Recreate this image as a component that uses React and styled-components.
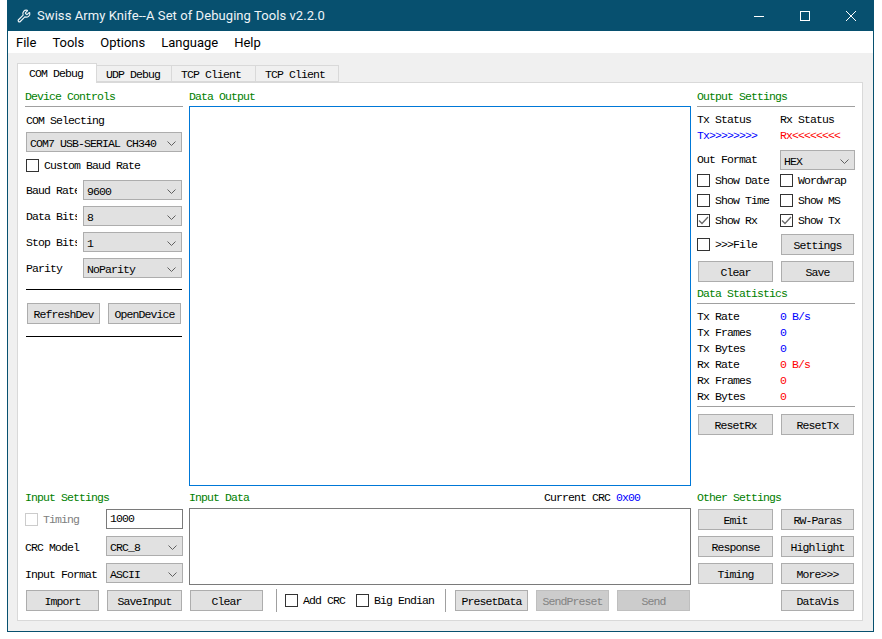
import styled, { createGlobalStyle } from "styled-components"
import { Wrench } from "lucide-react"

const GlobalStyle = createGlobalStyle`
    html, body {
        margin: 0;
        background: #fff;
    }
    * {
        box-sizing: border-box;
    }
`

const Window = styled.div`
    width: 867px;
    height: 632px;
    margin-left: 7px;
    display: flex;
    flex-direction: column;
    background: #f0f0f0;
    border: 1px solid #07506f;
    border-top: 0;
    font-family: "Liberation Mono", monospace;
    font-size: 11.5px;
    letter-spacing: -0.9px;
    color: #000;
`

const TitleBar = styled.div`
    height: 31px;
    flex: none;
    display: flex;
    align-items: center;
    background: #07506f;
    color: #eef4f7;
    padding-left: 10px;
    margin: 0 -1px;
`

const TitleText = styled.span`
    font-family: Roboto, sans-serif;
    font-size: 13px;
    font-variant-ligatures: none;
    letter-spacing: 0.07px;
    margin-left: 6px;
    flex: 1;
`

const WinButton = styled.div`
    width: 46px;
    height: 31px;
    display: flex;
    align-items: center;
    justify-content: center;
`

const MenuBar = styled.div`
    height: 22px;
    flex: none;
    display: flex;
    align-items: center;
    gap: 16px;
    padding-left: 8px;
    background: #fff;
    font-family: Roboto, sans-serif;
    font-size: 13px;
    letter-spacing: 0;
`

const Client = styled.div`
    flex: 1;
    display: flex;
    flex-direction: column;
    padding: 10px 10px 10px 9px;
`

const TabRow = styled.div`
    display: flex;
    align-items: flex-end;
    height: 19px;
    flex: none;
`

const Tab = styled.div`
    width: ${(p) => p.$w}px;
    height: ${(p) => (p.$active ? 20 : 17)}px;
    margin-bottom: ${(p) => (p.$active ? -1 : 0)}px;
    padding-left: ${(p) => (p.$active ? 11 : 9)}px;
    line-height: ${(p) => (p.$active ? 20 : 17)}px;
    background: ${(p) => (p.$active ? "#fff" : "#f0f0f0")};
    border: 1px solid #d9d9d9;
    border-bottom: ${(p) => (p.$active ? 0 : "1px solid #d9d9d9")};
    border-left: ${(p) => (p.$active ? "1px solid #d9d9d9" : 0)};
    position: relative;
    z-index: ${(p) => (p.$active ? 1 : 0)};
`

const Pane = styled.div`
    flex: 1;
    display: grid;
    grid-template-columns: 158px 502px 158px;
    grid-template-rows: 1fr auto;
    column-gap: 6px;
    row-gap: 3px;
    padding: 5px 7px 9px;
    background: #fff;
    border: 1px solid #d9d9d9;
`

const Column = styled.div`
    display: flex;
    flex-direction: column;
    min-height: 0;
`

const Heading = styled.div`
    color: #008000;
    line-height: 18px;
    height: ${(p) => p.$h || 18}px;
    margin-top: ${(p) => p.$mt || 0}px;
    flex: none;
`

const Rule = styled.div`
    height: 1px;
    flex: none;
    background: ${(p) => p.$color || "#a0a0a0"};
    margin: ${(p) => p.$mt || 0}px ${(p) => p.$inset || 0}px 0;
`

const Label = styled.div`
    line-height: 18px;
    height: 16px;
    margin-top: ${(p) => p.$mt || 0}px;
    margin-left: ${(p) => p.$ml || 0}px;
    white-space: nowrap;
`

const SelectBox = styled.div`
    width: ${(p) => p.$w}px;
    height: 20px;
    flex: none;
    display: flex;
    align-items: center;
    justify-content: space-between;
    margin-top: ${(p) => p.$mt || 0}px;
    margin-left: ${(p) => p.$ml || 0}px;
    padding: 2px 5px 0 3px;
    background: #e1e1e1;
    border: 1px solid #adadad;
    white-space: nowrap;
`

const FieldRow = styled.div`
    display: flex;
    align-items: center;
    height: 20px;
    flex: none;
    margin-top: ${(p) => p.$mt || 0}px;
`

const FieldLabel = styled.div`
    width: ${(p) => p.$w}px;
    height: 20px;
    flex: none;
    margin-left: ${(p) => p.$ml || 0}px;
    overflow: hidden;
    white-space: nowrap;
    line-height: ${(p) => p.$lh || 22}px;
`

const CheckRow = styled.div`
    display: flex;
    align-items: center;
    gap: 5px;
    height: ${(p) => p.$h || 19}px;
    flex: none;
    margin-top: ${(p) => p.$mt || 0}px;
    margin-left: ${(p) => p.$ml || 0}px;
    color: ${(p) => (p.$disabled ? "#808080" : "#000")};
    white-space: nowrap;
`

const CheckLabel = styled.span`
    line-height: 13px;
`

const Box = styled.span`
    width: 13px;
    height: 13px;
    flex: none;
    display: flex;
    align-items: center;
    justify-content: center;
    background: #fff;
    border: 1px solid ${(p) => (p.$disabled ? "#cccccc" : "#333333")};
`

const Button = styled.div`
    width: ${(p) => p.$w || 73}px;
    height: 21px;
    flex: none;
    display: flex;
    align-items: center;
    justify-content: center;
    padding-top: 2px;
    margin-left: ${(p) => p.$ml || 0}px;
    background: ${(p) => (p.$disabled ? "#cccccc" : "#e1e1e1")};
    border: 1px solid ${(p) => (p.$disabled ? "#bfbfbf" : "#adadad")};
    color: ${(p) => (p.$disabled ? "#838383" : "#000")};
    white-space: nowrap;
`

const ButtonRow = styled.div`
    display: flex;
    flex: none;
    height: 21px;
    align-items: center;
    margin-top: ${(p) => p.$mt || 0}px;
`

const TwoCol = styled.div`
    display: grid;
    grid-template-columns: 83px 75px;
    flex: none;
    row-gap: ${(p) => p.$gap || 0}px;
    margin-top: ${(p) => p.$mt || 0}px;
`

const StatList = styled.div`
    display: flex;
    flex-direction: column;
    flex: none;
    margin-top: 4px;
`

const StatRow = styled.div`
    display: flex;
    height: 16px;
    line-height: 18px;
    flex: none;
`

const StatKey = styled.span`
    width: 83px;
    flex: none;
`

const Colored = styled.span`
    color: ${(p) => p.$color};
`

const OutputBox = styled.div`
    flex: 1;
    background: #fff;
    border: 1px solid #0078d7;
`

const InputHead = styled.div`
    display: flex;
    justify-content: space-between;
    height: 19px;
    flex: none;
    padding-right: 51px;
    line-height: 18px;
`

const InputBox = styled.div`
    height: 77px;
    flex: none;
    background: #fff;
    border: 1px solid #7a7a7a;
`

const TextField = styled.div`
    width: 77px;
    height: 20px;
    flex: none;
    margin-left: auto;
    padding-left: 3px;
    line-height: 18px;
    background: #fff;
    border: 1px solid #7a7a7a;
`

const Separator = styled.div`
    width: 1px;
    height: 23px;
    flex: none;
    background: #a0a0a0;
    margin-left: ${(p) => p.$ml}px;
`

const Chevron = () => (
    <svg width="9" height="5" viewBox="0 0 9 5" fill="none" stroke="#606060">
        <path d="M0.5 0.5 L4.5 4.5 L8.5 0.5" />
    </svg>
)

const Check = () => (
    <svg width="11" height="11" viewBox="0 0 11 11" fill="none" stroke="#6a6a6a" strokeWidth="1.3">
        <path d="M1 5.5 L4 8.5 L10 2" />
    </svg>
)

const Select = ({ children, w, mt, ml }) => (
    <SelectBox $w={w} $mt={mt} $ml={ml}>
        <span>{children}</span>
        <Chevron />
    </SelectBox>
)

const CheckItem = ({ label, checked, disabled, h, mt, ml }) => (
    <CheckRow $h={h} $mt={mt} $ml={ml} $disabled={disabled}>
        <Box $disabled={disabled}>{checked && <Check />}</Box>
        <CheckLabel>{label}</CheckLabel>
    </CheckRow>
)

const Stat = ({ name, value, color }) => (
    <StatRow>
        <StatKey>{name}</StatKey>
        <Colored $color={color}>{value}</Colored>
    </StatRow>
)

const App = () => {
    return (<>
        <GlobalStyle />
        <Window>
            <TitleBar>
                <Wrench size={14} color="#eef4f7" />
                <TitleText>Swiss Army Knife--A Set of Debuging Tools v2.2.0</TitleText>
                <WinButton>
                    <svg width="10" height="10" viewBox="0 0 10 10" stroke="#fff"><path d="M0 5.5 H10" /></svg>
                </WinButton>
                <WinButton>
                    <svg width="10" height="10" viewBox="0 0 10 10" stroke="#fff" fill="none"><rect x="0.5" y="0.5" width="9" height="9" /></svg>
                </WinButton>
                <WinButton>
                    <svg width="10" height="10" viewBox="0 0 10 10" stroke="#fff"><path d="M0 0 L10 10 M10 0 L0 10" /></svg>
                </WinButton>
            </TitleBar>
            <MenuBar>
                <span>File</span>
                <span>Tools</span>
                <span>Options</span>
                <span>Language</span>
                <span>Help</span>
            </MenuBar>
            <Client>
                <TabRow>
                    <Tab $w={80} $active>COM Debug</Tab>
                    <Tab $w={75}>UDP Debug</Tab>
                    <Tab $w={84}>TCP Client</Tab>
                    <Tab $w={83}>TCP Client</Tab>
                </TabRow>
                <Pane>
                    <Column>
                        <Heading>Device Controls</Heading>
                        <Rule />
                        <Label $mt={5} $ml={1}>COM Selecting</Label>
                        <Select w={156} mt={4} ml={1}>COM7 USB-SERIAL CH340</Select>
                        <CheckItem label="Custom Baud Rate" h={13} mt={7} ml={1} />
                        <FieldRow $mt={8}>
                            <FieldLabel $w={51} $ml={1}>Baud Rate</FieldLabel>
                            <Select w={99} ml={6}>9600</Select>
                        </FieldRow>
                        <FieldRow $mt={6}>
                            <FieldLabel $w={51} $ml={1}>Data Bits</FieldLabel>
                            <Select w={99} ml={6}>8</Select>
                        </FieldRow>
                        <FieldRow $mt={6}>
                            <FieldLabel $w={51} $ml={1}>Stop Bits</FieldLabel>
                            <Select w={99} ml={6}>1</Select>
                        </FieldRow>
                        <FieldRow $mt={6}>
                            <FieldLabel $w={51} $ml={1}>Parity</FieldLabel>
                            <Select w={99} ml={6}>NoParity</Select>
                        </FieldRow>
                        <Rule $color="#000" $mt={11} $inset={1} />
                        <ButtonRow $mt={13}>
                            <Button $ml={2}>RefreshDev</Button>
                            <Button $ml={8}>OpenDevice</Button>
                        </ButtonRow>
                        <Rule $color="#000" $mt={12} $inset={1} />
                    </Column>

                    <Column>
                        <Heading>Data Output</Heading>
                        <OutputBox />
                    </Column>

                    <Column>
                        <Heading>Output Settings</Heading>
                        <Rule />
                        <TwoCol $mt={4}>
                            <StatRow>Tx Status</StatRow>
                            <StatRow>Rx Status</StatRow>
                            <StatRow><Colored $color="#0000ff">Tx&gt;&gt;&gt;&gt;&gt;&gt;&gt;&gt;</Colored></StatRow>
                            <StatRow><Colored $color="#ff0000">Rx&lt;&lt;&lt;&lt;&lt;&lt;&lt;&lt;</Colored></StatRow>
                        </TwoCol>
                        <TwoCol $mt={7}>
                            <FieldLabel $w={83} $lh={20}>Out Format</FieldLabel>
                            <Select w={75}>HEX</Select>
                        </TwoCol>
                        <TwoCol $mt={1} $gap={1}>
                            <CheckItem label="Show Date" />
                            <CheckItem label="Wordwrap" />
                            <CheckItem label="Show Time" />
                            <CheckItem label="Show MS" />
                            <CheckItem label="Show Rx" checked />
                            <CheckItem label="Show Tx" checked />
                        </TwoCol>
                        <TwoCol $mt={4}>
                            <CheckItem label=">>>File" h={21} />
                            <Button $ml={1}>Settings</Button>
                        </TwoCol>
                        <ButtonRow $mt={6}>
                            <Button $w={75} $ml={1}>Clear</Button>
                            <Button $ml={8}>Save</Button>
                        </ButtonRow>
                        <Heading $mt={3}>Data Statistics</Heading>
                        <Rule />
                        <StatList>
                            <Stat name="Tx Rate" value="0 B/s" color="#0000ff" />
                            <Stat name="Tx Frames" value="0" color="#0000ff" />
                            <Stat name="Tx Bytes" value="0" color="#0000ff" />
                            <Stat name="Rx Rate" value="0 B/s" color="#ff0000" />
                            <Stat name="Rx Frames" value="0" color="#ff0000" />
                            <Stat name="Rx Bytes" value="0" color="#ff0000" />
                        </StatList>
                        <Rule $mt={2} />
                        <ButtonRow $mt={7}>
                            <Button $w={75} $ml={1}>ResetRx</Button>
                            <Button $ml={8}>ResetTx</Button>
                        </ButtonRow>
                    </Column>

                    <Column>
                        <Heading $h={16}>Input Settings</Heading>
                        <FieldRow $mt={4}>
                            <CheckItem label="Timing" h={20} disabled />
                            <TextField>1000</TextField>
                        </FieldRow>
                        <FieldRow $mt={7}>
                            <FieldLabel $w={81} $lh={24}>CRC Model</FieldLabel>
                            <Select w={77}>CRC_8</Select>
                        </FieldRow>
                        <FieldRow $mt={7}>
                            <FieldLabel $w={81} $lh={24}>Input Format</FieldLabel>
                            <Select w={77}>ASCII</Select>
                        </FieldRow>
                        <ButtonRow $mt={7}>
                            <Button $ml={1}>Import</Button>
                            <Button $w={75} $ml={8}>SaveInput</Button>
                        </ButtonRow>
                    </Column>

                    <Column>
                        <InputHead>
                            <Colored $color="#008000">Input Data</Colored>
                            <span>Current CRC <Colored $color="#0000ff">0x00</Colored></span>
                        </InputHead>
                        <InputBox />
                        <ButtonRow $mt={5}>
                            <Button $ml={1}>Clear</Button>
                            <Separator $ml={13} />
                            <CheckItem label="Add CRC" h={21} ml={8} />
                            <CheckItem label="Big Endian" h={21} ml={11} />
                            <Separator $ml={11} />
                            <Button $ml={9}>PresetData</Button>
                            <Button $ml={8} $disabled>SendPreset</Button>
                            <Button $ml={8} $disabled>Send</Button>
                        </ButtonRow>
                    </Column>

                    <Column>
                        <Heading $h={16}>Other Settings</Heading>
                        <TwoCol $mt={4} $gap={6}>
                            <Button $w={75} $ml={1}>Emit</Button>
                            <Button $ml={1}>RW-Paras</Button>
                            <Button $w={75} $ml={1}>Response</Button>
                            <Button $ml={1}>Highlight</Button>
                            <Button $w={75} $ml={1}>Timing</Button>
                            <Button $ml={1}>More&gt;&gt;&gt;</Button>
                            <span />
                            <Button $ml={1}>DataVis</Button>
                        </TwoCol>
                    </Column>
                </Pane>
            </Client>
        </Window>
    </>)
}

export default App
